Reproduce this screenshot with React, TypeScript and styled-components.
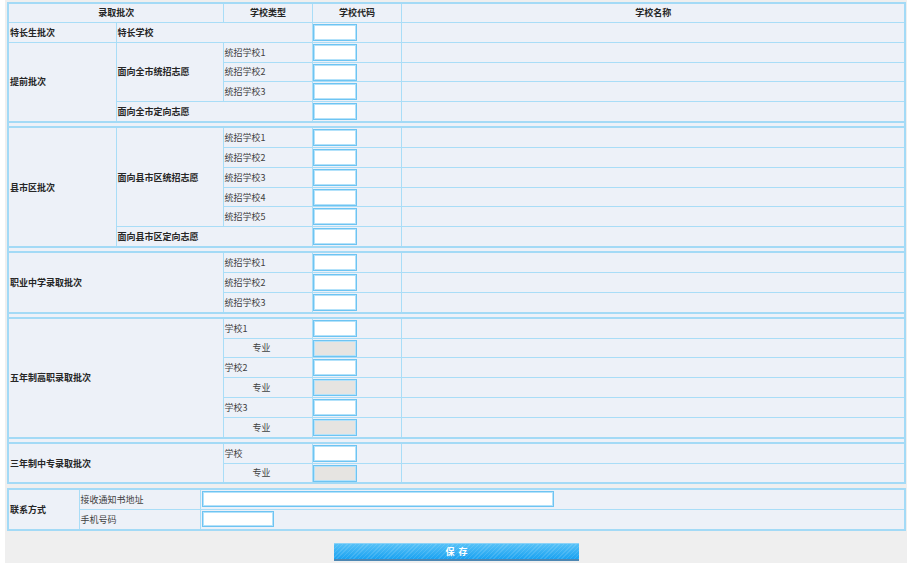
import React, { FunctionComponent } from "react";
import styled, { createGlobalStyle } from "styled-components";

const GlobalStyle = createGlobalStyle`
  body {
    margin: 0;
    background: #ffffff;
    font-family: "Noto Sans CJK SC", "Microsoft YaHei", sans-serif;
    font-size: 9px;
    color: #333333;
  }
`;

const StyledPage = styled.div`
  background-color: #efefef;
  margin-left: 5px;
  width: 902px;
  padding: 2px 1px 2px 2px;
  box-sizing: border-box;
`;

const StyledTable = styled.table<{ $top?: number }>`
  border-collapse: collapse;
  table-layout: fixed;
  width: 899px;
  margin-top: ${(p) => p.$top || 0}px;
  border: 2px solid #a3daf6;
  background-color: #edf1f8;
`;

const Cell = styled.td<{ $bold?: boolean; $center?: boolean; $indent?: number }>`
  border: 1px solid #a9ddf7;
  height: 17.85px;
  padding: 0 0 0 ${(p) => p.$indent ?? 1}px;
  font-size: 9px;
  line-height: 11px;
  font-weight: ${(p) => (p.$bold ? "bold" : "normal")};
  text-align: ${(p) => (p.$center ? "center" : "left")};
  color: ${(p) => (p.$bold ? "#262626" : "#404040")};
  vertical-align: middle;
  white-space: nowrap;
  overflow: hidden;
`;

const HeadCell = styled(Cell).attrs({ as: "th" })`
  font-weight: bold;
  text-align: center;
  color: #262626;
`;

const InputCell = styled(Cell)`
  padding: 1px 0 0 0;
  vertical-align: top;
`;

const SpacerCell = styled.td`
  border-top: 2px solid #a3daf6;
  border-bottom: 2px solid #a3daf6;
  height: 3px;
  padding: 0;
`;

const CodeInput = styled.input`
  display: block;
  box-sizing: border-box;
  width: 44px;
  height: 17px;
  margin: 0;
  padding: 0 2px;
  border: 1px solid #6ec4f2;
  box-shadow: inset 0 0 0 1px #b4e2fa;
  background-color: ${(p) => (p.disabled ? "#e6e4e1" : "#ffffff")};
  font-size: 9px;
  outline: none;
`;

const TextInput = styled(CodeInput)<{ $width: number }>`
  width: ${(p) => p.$width}px;
  height: 16px;
  margin-left: 1px;
`;

const Footer = styled.div`
  display: flex;
  justify-content: center;
  padding-top: 12px;
`;

const SaveButton = styled.button`
  width: 245px;
  height: 18px;
  padding: 0;
  border: none;
  border-top: 1px solid #8ad2f8;
  border-bottom: 2px solid #4d87b3;
  background:
    repeating-linear-gradient(135deg, rgba(255, 255, 255, 0.12) 0 1px, transparent 1px 3px),
    linear-gradient(#56c1f7, #1aa2f1);
  color: #ffffff;
  font-family: "Noto Sans CJK SC", sans-serif;
  font-size: 9px;
  font-weight: bold;
  line-height: 14px;
  letter-spacing: 4px;
  text-indent: 4px;
`;

const Code: FunctionComponent<{ disabled?: boolean }> = ({ disabled }) => (
  <InputCell>
    <CodeInput disabled={disabled} />
  </InputCell>
);

const Spacer = () => (
  <tr>
    <SpacerCell colSpan={5} />
  </tr>
);

const schools = (n: number) =>
  Array.from({ length: n }, (_, i) => `统招学校${i + 1}`);

const App: FunctionComponent = () => (
  <>
    <GlobalStyle />
    <StyledPage>
      <StyledTable>
        <colgroup>
          <col style={{ width: 108 }} />
          <col style={{ width: 107 }} />
          <col style={{ width: 89 }} />
          <col style={{ width: 89 }} />
          <col />
        </colgroup>
        <tbody>
          <tr>
            <HeadCell colSpan={2}>录取批次</HeadCell>
            <HeadCell>学校类型</HeadCell>
            <HeadCell>学校代码</HeadCell>
            <HeadCell>学校名称</HeadCell>
          </tr>
          <tr>
            <Cell $bold>特长生批次</Cell>
            <Cell $bold colSpan={2}>
              特长学校
            </Cell>
            <Code />
            <Cell />
          </tr>
          {schools(3).map((s, i) => (
            <tr key={s}>
              {i === 0 && (
                <Cell $bold rowSpan={4}>
                  提前批次
                </Cell>
              )}
              {i === 0 && (
                <Cell $bold rowSpan={3}>
                  面向全市统招志愿
                </Cell>
              )}
              <Cell>{s}</Cell>
              <Code />
              <Cell />
            </tr>
          ))}
          <tr>
            <Cell $bold colSpan={2}>
              面向全市定向志愿
            </Cell>
            <Code />
            <Cell />
          </tr>
          <Spacer />
          {schools(5).map((s, i) => (
            <tr key={s}>
              {i === 0 && (
                <Cell $bold rowSpan={6}>
                  县市区批次
                </Cell>
              )}
              {i === 0 && (
                <Cell $bold rowSpan={5}>
                  面向县市区统招志愿
                </Cell>
              )}
              <Cell>{s}</Cell>
              <Code />
              <Cell />
            </tr>
          ))}
          <tr>
            <Cell $bold colSpan={2}>
              面向县市区定向志愿
            </Cell>
            <Code />
            <Cell />
          </tr>
          <Spacer />
          {schools(3).map((s, i) => (
            <tr key={s}>
              {i === 0 && (
                <Cell $bold rowSpan={3} colSpan={2}>
                  职业中学录取批次
                </Cell>
              )}
              <Cell>{s}</Cell>
              <Code />
              <Cell />
            </tr>
          ))}
          <Spacer />
          {[1, 2, 3].map((n) => (
            <React.Fragment key={n}>
              <tr>
                {n === 1 && (
                  <Cell $bold rowSpan={6} colSpan={2}>
                    五年制高职录取批次
                  </Cell>
                )}
                <Cell>学校{n}</Cell>
                <Code />
                <Cell />
              </tr>
              <tr>
                <Cell $indent={29}>专业</Cell>
                <Code disabled />
                <Cell />
              </tr>
            </React.Fragment>
          ))}
          <Spacer />
          <tr>
            <Cell $bold rowSpan={2} colSpan={2}>
              三年制中专录取批次
            </Cell>
            <Cell>学校</Cell>
            <Code />
            <Cell />
          </tr>
          <tr>
            <Cell $indent={29}>专业</Cell>
            <Code disabled />
            <Cell />
          </tr>
        </tbody>
      </StyledTable>
      <StyledTable $top={4}>
        <colgroup>
          <col style={{ width: 71 }} />
          <col style={{ width: 121 }} />
          <col />
        </colgroup>
        <tbody>
          <tr>
            <Cell $bold rowSpan={2}>
              联系方式
            </Cell>
            <Cell>接收通知书地址</Cell>
            <InputCell>
              <TextInput $width={352} />
            </InputCell>
          </tr>
          <tr>
            <Cell>手机号码</Cell>
            <InputCell>
              <TextInput $width={72} />
            </InputCell>
          </tr>
        </tbody>
      </StyledTable>
      <Footer>
        <SaveButton>保存</SaveButton>
      </Footer>
    </StyledPage>
  </>
);

export default App;
